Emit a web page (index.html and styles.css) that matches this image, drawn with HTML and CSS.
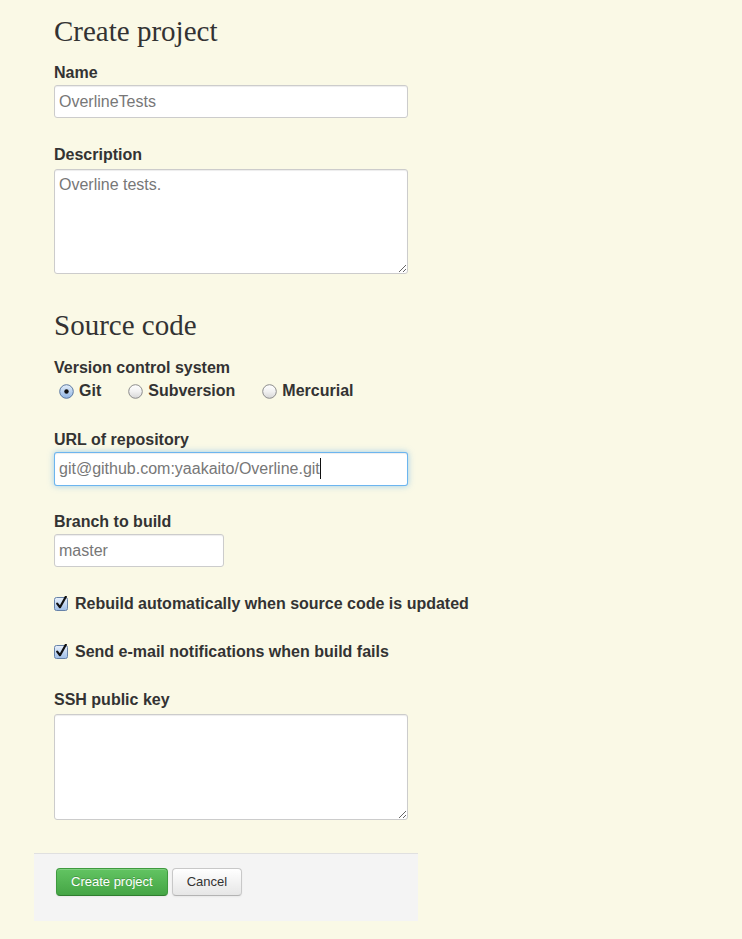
FILE: index.html
```html
<!DOCTYPE html>
<html lang="en">
<head>
<meta charset="utf-8">
<title>Create project</title>
<link rel="stylesheet" href="styles.css">
</head>
<body>
<div class="page">
  <form class="form">
    <div class="body">
      <h1 class="title">Create project</h1>

      <div class="field">
        <label class="label" for="name">Name</label>
        <input class="input wide" id="name" type="text" value="OverlineTests">
      </div>

      <div class="field">
        <label class="label" for="desc">Description</label>
        <textarea class="textarea wide" id="desc">Overline tests.</textarea>
      </div>

      <h2 class="title section">Source code</h2>

      <div class="field radio-field">
        <div class="label">Version control system</div>
        <div class="radios">
          <span class="option">
            <svg class="radio" width="15" height="15" viewBox="0 0 15 15">
              <defs>
                <linearGradient id="rb" x1="0" y1="0" x2="0" y2="1">
                  <stop offset="0" stop-color="#e4eefa"/>
                  <stop offset="0.5" stop-color="#b9d1ef"/>
                  <stop offset="1" stop-color="#8fb4e2"/>
                </linearGradient>
              </defs>
              <circle cx="7.5" cy="7.5" r="6.8" fill="url(#rb)" stroke="#5b78a0" stroke-width="1"/>
              <circle cx="7.5" cy="7.5" r="2.2" fill="#111"/>
            </svg>
            Git
          </span>
          <span class="option">
            <svg class="radio" width="15" height="15" viewBox="0 0 15 15">
              <defs>
                <linearGradient id="rw" x1="0" y1="0" x2="0" y2="1">
                  <stop offset="0" stop-color="#ffffff"/>
                  <stop offset="0.5" stop-color="#f1f1f1"/>
                  <stop offset="1" stop-color="#d6d6d6"/>
                </linearGradient>
              </defs>
              <circle cx="7.5" cy="7.5" r="6.8" fill="url(#rw)" stroke="#8c8c8c" stroke-width="1"/>
            </svg>
            Subversion
          </span>
          <span class="option">
            <svg class="radio" width="15" height="15" viewBox="0 0 15 15">
              <circle cx="7.5" cy="7.5" r="6.8" fill="url(#rw)" stroke="#8c8c8c" stroke-width="1"/>
            </svg>
            Mercurial
          </span>
        </div>
      </div>

      <div class="field focus-field">
        <label class="label">URL of repository</label>
        <div class="input wide focused">git@github.com:yaakaito/Overline.git<span class="caret"></span></div>
      </div>

      <div class="field">
        <label class="label" for="branch">Branch to build</label>
        <input class="input narrow" id="branch" type="text" value="master">
      </div>

      <div class="check first">
        <svg class="box" width="14" height="15" viewBox="0 0 14 15">
          <defs>
            <linearGradient id="cb" x1="0" y1="0" x2="0" y2="1">
              <stop offset="0" stop-color="#eaf1fb"/>
              <stop offset="0.5" stop-color="#c4d8f2"/>
              <stop offset="1" stop-color="#9dbde6"/>
            </linearGradient>
          </defs>
          <rect x="0.5" y="1.5" width="13" height="13" rx="2" fill="url(#cb)" stroke="#6682a8"/>
          <path d="M3.2 7.6 L6 11.2 L11.8 0.8" fill="none" stroke="#111" stroke-width="2.2" stroke-linecap="round" stroke-linejoin="round"/>
        </svg>
        Rebuild automatically when source code is updated
      </div>

      <div class="check second">
        <svg class="box" width="14" height="15" viewBox="0 0 14 15">
          <rect x="0.5" y="1.5" width="13" height="13" rx="2" fill="url(#cb)" stroke="#6682a8"/>
          <path d="M3.2 7.6 L6 11.2 L11.8 0.8" fill="none" stroke="#111" stroke-width="2.2" stroke-linecap="round" stroke-linejoin="round"/>
        </svg>
        Send e-mail notifications when build fails
      </div>

      <div class="field last">
        <label class="label" for="ssh">SSH public key</label>
        <textarea class="textarea wide tall" id="ssh"></textarea>
      </div>
    </div>

    <div class="actions">
      <button type="button" class="btn primary">Create project</button>
      <button type="button" class="btn">Cancel</button>
    </div>
  </form>
</div>
</body>
</html>
```

FILE: styles.css
```css
html, body {
  margin: 0;
  padding: 0;
  background: #faf9e6;
}

body {
  font-family: "Liberation Sans", Arial, Helvetica, sans-serif;
  color: #333;
}

.page {
  width: 384px;
  margin-left: 34px;
  padding-top: 13px;
}

.form {
  margin: 0;
}

.body {
  padding: 0 20px;
}

.title {
  font-family: "Liberation Serif", "Times New Roman", serif;
  font-weight: normal;
  font-size: 29px;
  line-height: 36px;
  color: #333;
  margin: 0 0 13px;
}

.section {
  margin-top: 33px;
  margin-bottom: 14px;
}

.field {
  margin-bottom: 26px;
}

.field.radio-field {
  margin-bottom: 27px;
}

.field.focus-field {
  margin-bottom: 25px;
}

.field.last {
  margin-bottom: 0;
}

.label {
  display: block;
  font-weight: bold;
  font-size: 16px;
  line-height: 20px;
  padding-top: 1px;
  margin-bottom: 2px;
  color: #333;
}

.input {
  display: block;
  box-sizing: border-box;
  height: 33px;
  margin: 0;
  padding: 0 4px;
  font-family: "Liberation Sans", Arial, sans-serif;
  font-size: 16px;
  line-height: 31px;
  color: #777;
  background: #fff;
  border: 1px solid #cccccc;
  border-radius: 3px;
  box-shadow: inset 0 1px 1px rgba(0, 0, 0, 0.075);
  outline: none;
}

.wide {
  width: 354px;
}

.narrow {
  width: 170px;
}

.focused {
  height: 34px;
  line-height: 32px;
  border-color: rgba(82, 168, 236, 0.85);
  box-shadow: inset 0 1px 1px rgba(0, 0, 0, 0.075), 0 0 6px rgba(82, 168, 236, 0.55);
  white-space: nowrap;
}

.caret {
  display: inline-block;
  width: 1px;
  height: 21px;
  background: #111;
  vertical-align: -5px;
}

.textarea {
  display: block;
  box-sizing: border-box;
  height: 105px;
  margin: 4px 0 0;
  padding: 5px 4px;
  font-family: "Liberation Sans", Arial, sans-serif;
  font-size: 16px;
  line-height: 20px;
  color: #777;
  background: #fff;
  border: 1px solid #cccccc;
  border-radius: 3px;
  box-shadow: inset 0 1px 1px rgba(0, 0, 0, 0.075);
  outline: none;
  resize: vertical;
}

.textarea.tall {
  height: 106px;
}

.radios {
  display: flex;
  align-items: center;
  height: 22px;
}

.option {
  display: flex;
  align-items: center;
  font-weight: bold;
  font-size: 16px;
  line-height: 22px;
  margin-right: 22px;
  white-space: nowrap;
}

.radio {
  display: block;
  margin: 0 5px 0 5px;
  flex: none;
}

.check {
  display: flex;
  align-items: center;
  height: 22px;
  font-weight: bold;
  font-size: 16px;
  line-height: 22px;
  margin-bottom: 26px;
  white-space: nowrap;
}

.check.first {
  margin-top: 0;
}

.check.second {
  margin-bottom: 26px;
}

.box {
  display: block;
  flex: none;
  margin-right: 7px;
  margin-top: -1px;
}

.actions {
  display: flex;
  gap: 4px;
  margin-top: 33px;
  background: #f4f4f4;
  border-top: 1px solid #e0e0e0;
  padding: 14px 22px 25px;
}

.btn {
  box-sizing: border-box;
  height: 28px;
  padding: 0 14px;
  font-family: "Liberation Sans", Arial, sans-serif;
  font-size: 13px;
  line-height: 26px;
  color: #333;
  background: linear-gradient(#ffffff, #e6e6e6);
  border: 1px solid #c8c8c8;
  border-bottom-color: #b3b3b3;
  border-radius: 4px;
  box-shadow: inset 0 1px 0 rgba(255, 255, 255, 0.2), 0 1px 2px rgba(0, 0, 0, 0.05);
  cursor: pointer;
}

.btn.primary {
  color: #fff;
  background: linear-gradient(#62c462, #45a545);
  border-color: #3f9a3f #3f9a3f #2f7d2f;
  text-shadow: 0 -1px 0 rgba(0, 0, 0, 0.2);
}
```
